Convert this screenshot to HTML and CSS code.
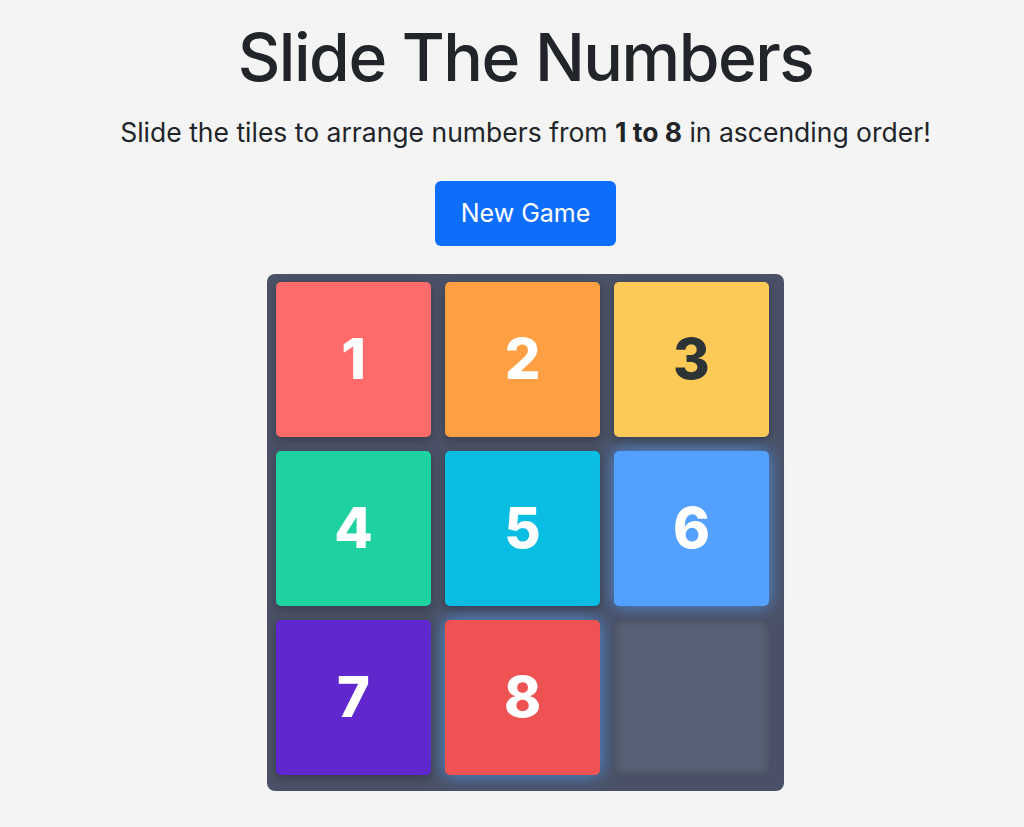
FILE: index.html
```html
<!DOCTYPE html>
<html>
<head>
<meta charset="utf-8">
<title>Slide The Numbers</title>
<link rel="stylesheet" href="styles.css">
</head>
<body>
    <div class="juego">
        <h1 class="titulo">Slide The Numbers</h1>
        <p class="subtitulo">Slide the tiles to arrange numbers from <strong>1 to 8</strong> in ascending order!</p>
        <button class="boton" id="nuevo">New Game</button>

        <div class="tablero">
            <div class="ficha f1">1</div>
            <div class="ficha f2">2</div>
            <div class="ficha f3">3</div>
            <div class="ficha f4">4</div>
            <div class="ficha f5">5</div>
            <div class="ficha f6 movible">6</div>
            <div class="ficha f7">7</div>
            <div class="ficha f8 movible">8</div>
            <div class="ficha vacia"></div>
        </div>
    </div>
</body>
</html>
```

FILE: styles.css
```css
body {
    margin: 0;
    background-color: #f4f4f4;
    color: #212529;
    font-family: Inter, "Noto Sans", sans-serif;
}

.juego {
    display: flex;
    flex-direction: column;
    align-items: center;
    padding-top: 18px;
    padding-left: 27px;
}

.titulo {
    margin: 0;
    font-size: 66px;
    font-weight: 500;
    line-height: 1.2;
    letter-spacing: -1.5px;
}

.subtitulo {
    margin: 16px 0 0 0;
    font-size: 26.5px;
    line-height: 1.5;
}

.subtitulo strong {
    font-weight: 700;
}

.boton {
    margin-top: 28px;
    width: 181px;
    height: 65px;
    border: none;
    border-radius: 6px;
    background-color: #0d6efd;
    color: white;
    font-family: Inter, "Noto Sans", sans-serif;
    font-size: 25px;
    cursor: pointer;
}

.tablero {
    margin-top: 28px;
    display: grid;
    grid-template-columns: repeat(3, 155px);
    grid-template-rows: repeat(3, 155px);
    gap: 14px;
    padding: 8px 15px 16px 9px;
    background-color: #4a5166;
    border-radius: 8px;
}

.ficha {
    display: flex;
    align-items: center;
    justify-content: center;
    border-radius: 5px;
    color: white;
    font-size: 56px;
    font-weight: 800;
    box-shadow: 0 3px 8px rgba(0, 0, 0, 0.25);
}

.f1 { background-color: #ff6b6b; }
.f2 { background-color: #ff9f43; }
.f3 { background-color: #feca57; color: #2d3436; }
.f4 { background-color: #1dd1a1; }
.f5 { background-color: #0abde3; }
.f6 { background-color: #54a0ff; }
.f7 { background-color: #5f27cd; }
.f8 { background-color: #ee5253; }

.movible {
    box-shadow: 0 0 18px rgba(84, 160, 255, 0.8);
}

.vacia {
    background-color: #576074;
    box-shadow: inset 0 0 8px rgba(0, 0, 0, 0.25);
}
```
